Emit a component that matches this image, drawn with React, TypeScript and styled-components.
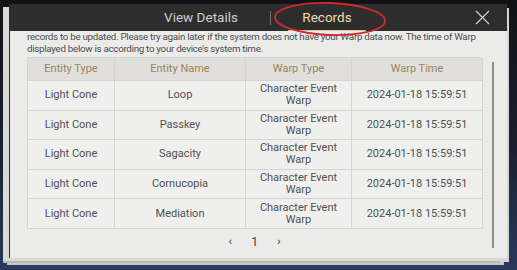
import React from "react";
import styled, { createGlobalStyle } from "styled-components";

const GlobalStyle = createGlobalStyle`
  html, body {
    margin: 0;
    padding: 0;
  }
  body {
    width: 517px;
    height: 270px;
    overflow: hidden;
    background: linear-gradient(180deg, #111215 0%, #1b2030 55%, #2a3a5c 100%);
    font-family: "Roboto", "Liberation Sans", Arial, sans-serif;
  }
`;

const Stage = styled.div`
  width: 517px;
  height: 270px;
  position: relative;
  padding: 4px 0 0 10px;
  box-sizing: border-box;
`;

const Panel = styled.div`
  width: 497px;
  height: 254px;
  display: flex;
  flex-direction: column;
  background: #ebebea;
  box-shadow:
    -1px 0 0 #2a2a2a,
    -7px 3px 0 #d9d9d7,
    -7px 5px 0 #b8b8b6,
    2px 4px 0 #d6d6d4,
    -3px 7px 0 #c9c9c7;
`;

const Header = styled.div`
  height: 27px;
  flex-shrink: 0;
  background: #2d2d2d;
  display: flex;
  align-items: center;
  position: relative;
`;

const HeaderSpacer = styled.div`
  width: 131px;
`;

const Tab = styled.div<{ $active?: boolean }>`
  height: 27px;
  width: ${(p) => (p.$active ? "78px" : "120px")};
  display: flex;
  align-items: center;
  justify-content: center;
  font-size: 13.5px;
  color: ${(p) => (p.$active ? "#ecdcaa" : "#cfcfcf")};
  font-weight: 400;
  box-sizing: border-box;
  border-bottom: 1px solid ${(p) => (p.$active ? "#d8c89a" : "transparent")};
`;

const TabSep = styled.div`
  width: 1px;
  height: 14px;
  background: #6f6f6f;
  margin: 0 17px 0 9px;
`;

const CloseBtn = styled.div`
  position: absolute;
  right: 17px;
  top: 6px;
  width: 15px;
  height: 15px;
`;

const Body = styled.div`
  flex: 1;
  display: flex;
  position: relative;
  overflow: hidden;
`;

const Content = styled.div`
  width: 455px;
  padding: 0 0 0 17px;
  display: flex;
  flex-direction: column;
`;

const Notice = styled.p`
  margin: 0 0 2px;
  font-size: 9.8px;
  line-height: 12px;
  letter-spacing: -0.3px;
  color: #4c4c4c;
  white-space: nowrap;
`;

const Table = styled.div`
  display: grid;
  grid-template-columns: 87px 131px 106px 131px;
  border-left: 1px solid #d4d4d2;
  border-top: 1px solid #d4d4d2;
`;

const Cell = styled.div<{ $head?: boolean }>`
  height: ${(p) => (p.$head ? "22px" : "28.6px")};
  display: flex;
  align-items: center;
  justify-content: center;
  text-align: center;
  border-right: 1px solid #d4d4d2;
  border-bottom: 1px solid #d4d4d2;
  background: ${(p) => (p.$head ? "#e0dfdc" : "#efefee")};
  color: ${(p) => (p.$head ? "#9a8559" : "#505050")};
  font-size: 11px;
  line-height: 12px;
  font-weight: 400;
`;

const Pager = styled.div`
  display: flex;
  justify-content: center;
  align-items: center;
  gap: 19px;
  margin-top: 5px;
  font-size: 13px;
  color: #4a4a4a;
`;

const Arrow = styled.span`
  font-size: 11px;
  color: #555;
  font-weight: 700;
`;

const ScrollTrack = styled.div`
  width: 2px;
  height: 186px;
  margin: 31px 0 0 10px;
  background: #8d8d8d;
`;

const Annotation = styled.svg`
  position: absolute;
  left: 270px;
  top: 0;
  pointer-events: none;
`;

const columns = ["Entity Type", "Entity Name", "Warp Type", "Warp Time"];
const names = ["Loop", "Passkey", "Sagacity", "Cornucopia", "Mediation"];

export default function App() {
  return (
    <>
      <GlobalStyle />
      <Stage>
        <Panel>
          <Header>
            <HeaderSpacer />
            <Tab>View Details</Tab>
            <TabSep />
            <Tab $active>Records</Tab>
            <CloseBtn>
              <svg width="15" height="15" viewBox="0 0 15 15">
                <path d="M1 1 L14 14 M14 1 L1 14" stroke="#cfcfcf" strokeWidth="1.2" />
              </svg>
            </CloseBtn>
          </Header>
          <Body>
            <Content>
              <Notice>
                records to be updated. Please try again later if the system does not have your Warp data now. The time of Warp
                <br />
                displayed below is according to your device's system time.
              </Notice>
              <Table>
                {columns.map((c) => (
                  <Cell key={c} $head>{c}</Cell>
                ))}
                {names.map((n) => (
                  <React.Fragment key={n}>
                    <Cell>Light Cone</Cell>
                    <Cell>{n}</Cell>
                    <Cell>Character Event<br />Warp</Cell>
                    <Cell>2024-01-18 15:59:51</Cell>
                  </React.Fragment>
                ))}
              </Table>
              <Pager>
                <Arrow>&lsaquo;</Arrow>
                <span>1</span>
                <Arrow>&rsaquo;</Arrow>
              </Pager>
            </Content>
            <ScrollTrack />
          </Body>
        </Panel>
        <Annotation width="124" height="40" viewBox="0 0 124 40">
          <ellipse cx="60" cy="19" rx="55" ry="16" fill="none" stroke="#d0282c" strokeWidth="1.8" transform="rotate(2 60 19)" />
        </Annotation>
      </Stage>
    </>
  );
}
